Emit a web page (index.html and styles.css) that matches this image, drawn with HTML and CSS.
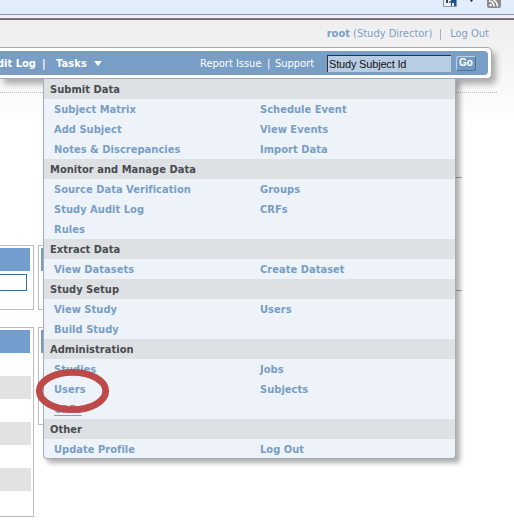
FILE: index.html
```html
<!DOCTYPE html>
<html lang="en">
<head>
<meta charset="utf-8">
<title>Tasks</title>
<link rel="stylesheet" href="styles.css">
</head>
<body>
<div class="toolbar">
  <svg class="tool-icons" width="80" height="8" viewBox="0 0 80 8">
    <path d="M13.500 0v6.500h13V0" fill="#eef2f7" stroke="#8d949c"/>
    <path d="M16 0h2v3h-2z" fill="#34475f"/><path d="M19 1h2v2h-2z" fill="#6b7c94"/>
    <path d="M21 0h5v6h-5z" fill="#1d4f91"/><path d="M22 3h2v3h-2z" fill="#fff"/>
    <path d="M40 0h3l-1.500 2z" fill="#222"/>
    <path d="M57 0h14v6q0 2-2 2h-10q-2 0-2-2z" fill="#8c8c8c"/>
    <circle cx="60.500" cy="5" r="1.300" fill="#fff"/>
    <path d="M59 1q4.500 0 5 5.500M62 -1q5 2 5.500 7.500" fill="none" stroke="#fff" stroke-width="1.500"/>
  </svg>
</div>
<main class="page">
  <div class="account"><span><b>root</b> (Study Director)</span><i></i><span>Log Out</span></div>
  <header class="nav-frame">
    <nav class="nav">
      <b class="audit">dit Log</b><b class="bar">|</b><b class="tasks">Tasks</b><span class="caret"></span>
      <span class="report">Report Issue</span><span class="bar2">|</span><span class="support">Support</span>
      <input class="search" value="Study Subject Id"><button class="go">Go</button>
    </nav>
  </header>
  <div class="dotted"></div>
  <div class="panels">
    <section class="panel short"><div class="head"></div><div class="field"></div></section>
    <section class="panel side"><div class="head"></div></section>
  </div>
  <div class="panels second">
    <section class="panel tall"><div class="head"></div><div class="stripes"></div></section>
    <section class="panel side low"><div class="head"></div></section>
  </div>
</main>
<div class="rule one"></div>
<div class="rule two"></div>
<div class="menu">
  <h3>Submit Data</h3>
  <div class="row"><a>Subject Matrix</a><a>Schedule Event</a></div>
  <div class="row"><a>Add Subject</a><a>View Events</a></div>
  <div class="row"><a>Notes &amp; Discrepancies</a><a>Import Data</a></div>
  <h3>Monitor and Manage Data</h3>
  <div class="row"><a>Source Data Verification</a><a>Groups</a></div>
  <div class="row"><a>Study Audit Log</a><a>CRFs</a></div>
  <div class="row"><a>Rules</a></div>
  <h3>Extract Data</h3>
  <div class="row"><a>View Datasets</a><a>Create Dataset</a></div>
  <h3>Study Setup</h3>
  <div class="row"><a>View Study</a><a>Users</a></div>
  <div class="row"><a>Build Study</a></div>
  <h3>Administration</h3>
  <div class="row"><a>Studies</a><a>Jobs</a></div>
  <div class="row"><a>Users</a><a>Subjects</a></div>
  <div class="row"><a class="under">CRFs</a></div>
  <h3>Other</h3>
  <div class="row"><a>Update Profile</a><a>Log Out</a></div>
</div>
<svg class="ring" width="76" height="46" viewBox="0 0 76 46"><ellipse cx="37.500" cy="23" rx="33.200" ry="18.700" fill="none" stroke="#bd4a49" stroke-width="6.800"/></svg>
</body>
</html>
```
FILE: styles.css
```css
* { box-sizing: border-box; }
body { margin: 0; width: 514px; height: 529px; overflow: hidden; position: relative; background: #fff; font: 11px "DejaVu Sans Condensed", "DejaVu Sans", sans-serif; font-stretch: condensed; }
.toolbar { height: 20px; padding-left: 430px; background: linear-gradient(#e1edfa 0 14px, #8b8da9 14px 15px, #f0f0f6 15px 18px, #7e7a80 18px 19px, #706c70 19px 20px); }
.tool-icons { display: block; }
.page { height: 509px; background: linear-gradient(#eee, #fff 105px); }
.account { height: 27px; padding: 6px 25px 0 0; display: flex; justify-content: flex-end; line-height: 16px; color: #7b9fc5; }
.account i { width: 1px; height: 11px; margin: 3px 9px 0 8px; background: #9bb5d0; }
.nav-frame { width: 492px; height: 32px; padding: 3px 3px 3px 0; background: #fff; border: 1px solid #aaa; border-left: 0; border-radius: 0 5px 5px 0; box-shadow: 4px 5px 6px #aaa; }
.nav { height: 24px; display: flex; align-items: center; border-radius: 0 4px 4px 0; background: #789ec5; color: #fff; white-space: nowrap; }
.nav > * { flex: none; }
.audit { width: 42px; margin-left: -3px; }
.bar { width: 17px; padding-left: 3px; }
.tasks { width: 38px; letter-spacing: .15px; }
.caret { border: 4px solid transparent; border-top: 5px solid #fff; border-bottom: 0; }
.report { width: 64px; margin-left: 98px; }
.bar2 { width: 11px; padding-left: 3px; }
.support { width: 52px; }
.search { width: 124px; height: 17px; padding: 0 1px; border: 0; border-top: 1px solid #333; border-left: 1px solid #333; border-radius: 0; background: #b9cde2; color: #111; font: 11px "Liberation Sans", sans-serif; letter-spacing: -.18px; }
.go { width: 20px; height: 15px; margin-left: 5px; padding: 0; border: 1px solid #bdd2e8; border-right-color: #456f9e; border-bottom-color: #456f9e; border-radius: 3px; background: #7299c2; color: #fff; font: bold 10px/12px "Liberation Sans", sans-serif; }
.dotted { width: 497px; margin-top: 13px; border-top: 1px dotted #bbb; }
.panels { margin-top: 152px; display: flex; align-items: flex-start; gap: 4px; }
.second { margin-top: 17px; }
.panel { width: 34px; padding: 2px 3px 0 0; background: #fff; border: 1px solid #bcbcbc; border-left: 0; }
.short, .side { height: 65px; }
.tall { height: 190px; padding-right: 2px; }
.side { width: 100px; padding-left: 2px; border-left: 1px solid #bcbcbc; }
.side.low { height: 98px; }
.head { height: 23px; background: #739dcf; }
.tall .head { margin-right: 1px; }
.field { width: 27px; height: 17px; margin-top: 3px; border: 1px solid #3c6f96; border-left: 0; }
.stripes { height: 138px; margin-top: 23px; background: repeating-linear-gradient(#e2e2e2 0 23px, #fff 23px 46px); }
.rule { position: absolute; left: 450px; width: 12px; height: 1px; background: #aaa; }
.one { top: 177px; }
.two { top: 290px; }
.menu { position: absolute; left: 43px; top: 78px; width: 413px; height: 381px; background: #edf3f8; border: 1px solid #a5abb0; border-top-color: #aaa; border-radius: 0 0 4px 4px; box-shadow: 4px 4px 5px rgba(0,0,0,.32); overflow: hidden; font-weight: bold; line-height: 22px; letter-spacing: .04px; }
.menu h3 { margin: 0; height: 20px; padding-left: 6px; background: #dde1e4; color: #484b4f; font-size: 11px; }
.row { height: 20px; padding-left: 10px; display: grid; grid-template-columns: 206px 1fr; color: #789ec5; }
.row a { justify-self: start; }
.under { text-decoration: underline; text-underline-offset: 2px; }
.ring { position: absolute; left: 35px; top: 368px; }
```
